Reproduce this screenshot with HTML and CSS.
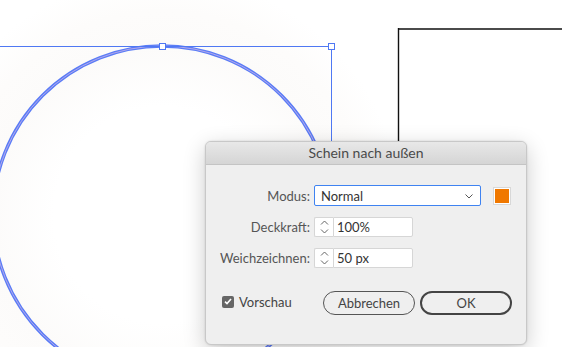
FILE: index.html
```html
<!DOCTYPE html>
<html lang="de">
<head>
  <meta charset="UTF-8">
  <title>Schein nach außen</title>
  <link rel="stylesheet" href="styles.css">
</head>
<body>

  <div class="artboard">
    <!-- Canvas: circle with glow, selection box, rectangle -->
    <svg class="canvas" width="562" height="347" viewBox="0 0 562 347">
      <defs>
        <radialGradient id="glow" cx="162" cy="215" r="240" gradientUnits="userSpaceOnUse">
          <stop offset="0" stop-color="#ffffff"/>
          <stop offset="0.45" stop-color="#ffffff"/>
          <stop offset="0.7" stop-color="#fcfbfa"/>
          <stop offset="0.85" stop-color="#fdfcfb"/>
          <stop offset="1" stop-color="#ffffff"/>
        </radialGradient>
      </defs>
      <rect width="562" height="347" fill="url(#glow)"/>
      <path d="M398 29 L562 29 M398.5 28 L398.5 160" stroke="#111" stroke-width="1.4" fill="none"/>
      <circle cx="162" cy="215" r="169" fill="none" stroke="#5a7cf6" stroke-width="3.4"/>
      <circle cx="162" cy="215" r="169" fill="none" stroke="#c9b4e8" stroke-width="0.8"/>
      <path d="M0 46.5 L331 46.5 M331.5 46 L331.5 160" stroke="#4f78f3" stroke-width="1" fill="none"/>
      <rect x="159.5" y="43.5" width="6" height="6" fill="#fff" stroke="#4f78f3" stroke-width="1"/>
      <rect x="328.5" y="43.5" width="6" height="6" fill="#fff" stroke="#4f78f3" stroke-width="1"/>
    </svg>

    <!-- Dialog -->
    <div class="dialog">
      <div class="dialog-title">Schein nach außen</div>

      <div class="dialog-body">
        <div class="form">
          <label class="form-label">Modus:</label>
          <div class="form-control">
            <div class="select">
              <span>Normal</span>
              <svg class="chevron" width="8" height="5" viewBox="0 0 8 5">
                <path d="M0.5 0.5 L4 4 L7.5 0.5" stroke="#555" stroke-width="1" fill="none"/>
              </svg>
            </div>
            <div class="swatch"><div class="swatch-color"></div></div>
          </div>

          <label class="form-label">Deckkraft:</label>
          <div class="form-control">
            <div class="stepper">
              <svg width="9" height="16" viewBox="0 0 9 16">
                <path d="M1 5.5 L4.5 2 L8 5.5 M1 10.5 L4.5 14 L8 10.5" stroke="#666" stroke-width="1" fill="none"/>
              </svg>
            </div>
            <div class="field">100%</div>
          </div>

          <label class="form-label">Weichzeichnen:</label>
          <div class="form-control">
            <div class="stepper">
              <svg width="9" height="16" viewBox="0 0 9 16">
                <path d="M1 5.5 L4.5 2 L8 5.5 M1 10.5 L4.5 14 L8 10.5" stroke="#666" stroke-width="1" fill="none"/>
              </svg>
            </div>
            <div class="field">50 px</div>
          </div>
        </div>

        <div class="dialog-footer">
          <div class="checkbox">
            <span class="checkbox-box">
              <svg width="8" height="7" viewBox="0 0 8 7">
                <path d="M1 3.6 L3 5.6 L7 1" stroke="#fff" stroke-width="1.6" fill="none"/>
              </svg>
            </span>
            Vorschau
          </div>
          <div class="buttons">
            <button class="btn">Abbrechen</button>
            <button class="btn btn-default">OK</button>
          </div>
        </div>
      </div>
    </div>
  </div>

</body>
</html>
```

FILE: styles.css
```css
body {
  margin: 0;
  padding: 0;
  background: #fff;
  font-family: 'Lato', 'Open Sans', sans-serif;
  overflow: hidden;
}

.artboard {
  position: relative;
  width: 562px;
  height: 347px;
  overflow: hidden;
}

.canvas {
  display: block;
}

/* Dialog floats over the canvas */
.dialog {
  position: absolute;
  left: 205px;
  top: 141px;
  width: 322px;
  height: 204px;
  background: #efefef;
  border: 1px solid #c8c8c8;
  border-radius: 6px;
  box-sizing: border-box;
  box-shadow: 0 6px 22px rgba(0, 0, 0, 0.2), 0 0 2px rgba(0, 0, 0, 0.15);
  overflow: hidden;
}

.dialog-title {
  height: 22px;
  line-height: 22px;
  text-align: center;
  font-size: 14px;
  color: #4a4a4a;
  background: linear-gradient(#e8e8e8, #d5d5d5);
  border-bottom: 1px solid #c4c4c4;
}

.dialog-body {
  padding-top: 20px;
}

.form {
  display: grid;
  grid-template-columns: 104px auto;
  column-gap: 4px;
  row-gap: 11px;
  align-items: center;
}

.form-label {
  text-align: right;
  font-size: 13px;
  color: #555;
}

.form-control {
  display: flex;
  align-items: center;
}

.select {
  width: 167px;
  height: 21px;
  box-sizing: border-box;
  border: 1px solid #3f83f1;
  border-radius: 2px;
  background: #fff;
  display: flex;
  align-items: center;
  justify-content: space-between;
  padding: 0 7px 0 6px;
  font-size: 13px;
  color: #333;
}

.chevron {
  margin-top: 1px;
}

.swatch {
  margin-left: 12px;
  width: 18px;
  height: 18px;
  box-sizing: border-box;
  border: 1px solid #d8d8d8;
  background: #fff;
  padding: 1px;
}

.swatch-color {
  width: 100%;
  height: 100%;
  background: #f07800;
}

.stepper {
  width: 19px;
  height: 20px;
  box-sizing: border-box;
  border: 1px solid #d6d6d6;
  border-right: none;
  border-radius: 2px 0 0 2px;
  background: #fff;
  display: flex;
  align-items: center;
  justify-content: center;
}

.field {
  width: 80px;
  height: 20px;
  box-sizing: border-box;
  border: 1px solid #d6d6d6;
  border-radius: 0 2px 2px 0;
  background: #fff;
  font-size: 13px;
  line-height: 18px;
  color: #333;
  padding-left: 3px;
}

.dialog-footer {
  display: flex;
  align-items: center;
  justify-content: space-between;
  padding: 23px 14px 0 16px;
}

.checkbox {
  display: flex;
  align-items: center;
  font-size: 13px;
  color: #444;
  margin-top: -3px;
}

.checkbox-box {
  width: 12px;
  height: 12px;
  background: #666;
  border-radius: 2px;
  display: flex;
  align-items: center;
  justify-content: center;
  margin-right: 5px;
}

.buttons {
  display: flex;
  gap: 5px;
}

.btn {
  width: 92px;
  height: 24px;
  box-sizing: border-box;
  border: 1px solid #555;
  border-radius: 12px;
  background: transparent;
  font-family: 'Lato', 'Open Sans', sans-serif;
  font-size: 13px;
  color: #444;
  padding: 0;
}

.btn-default {
  border: 2px solid #444;
}
```
